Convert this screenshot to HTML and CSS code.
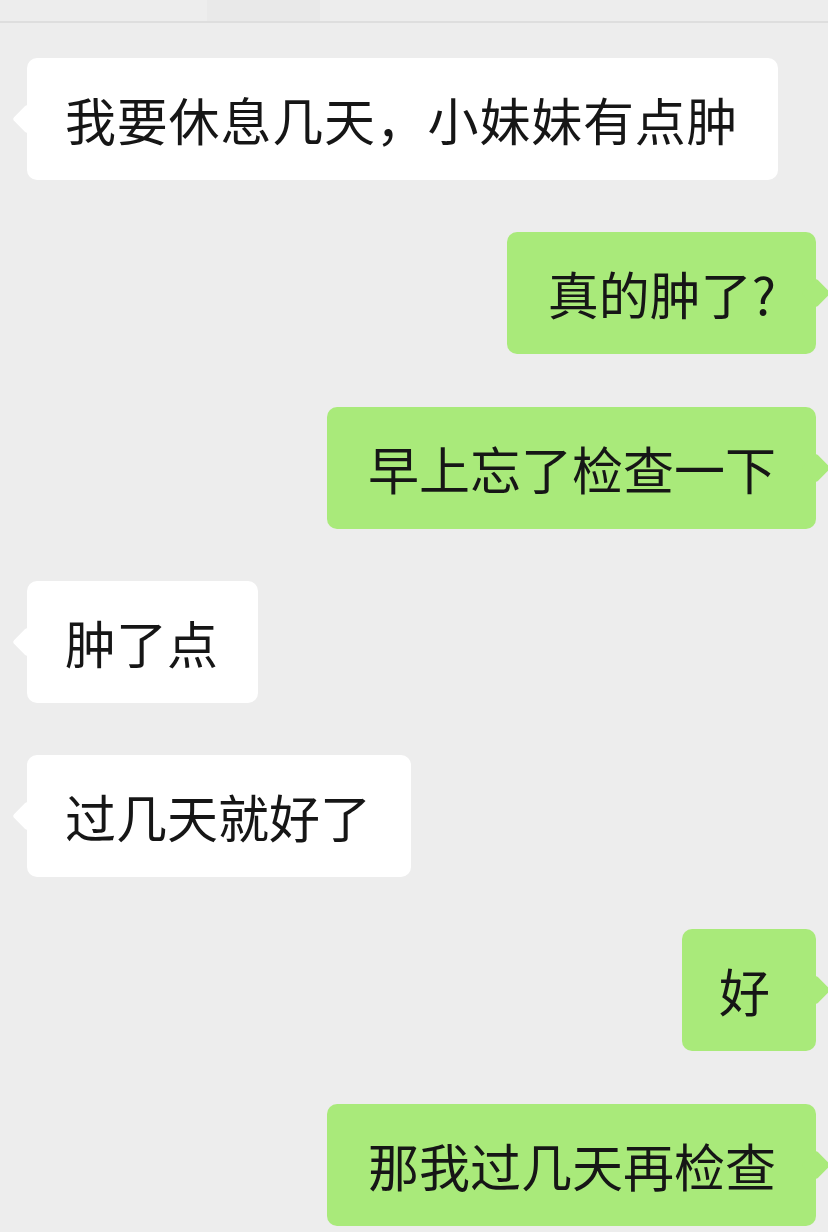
FILE: index.html
```html
<!DOCTYPE html>
<html lang="zh-CN">
<head>
    <meta charset="UTF-8">
    <meta name="viewport" content="width=device-width, initial-scale=1.0">
    <title>聊天</title>
    <link rel="stylesheet" href="styles.css">
</head>
<body>
    <div class="topBar">
        <div class="topMark"></div>
    </div>
    <div class="chat">
        <div class="row left"><div class="bubble wide">我要休息几天，小妹妹有点肿</div></div>
        <div class="row right"><div class="bubble">真的肿了?</div></div>
        <div class="row right"><div class="bubble">早上忘了检查一下</div></div>
        <div class="row left"><div class="bubble">肿了点</div></div>
        <div class="row left"><div class="bubble">过几天就好了</div></div>
        <div class="row right"><div class="bubble single">好</div></div>
        <div class="row right"><div class="bubble">那我过几天再检查</div></div>
    </div>
</body>
</html>
```

FILE: styles.css
```css
*{
    padding: 0;
    margin: 0;
    box-sizing: border-box;
}
body{
    background: #ededed;
    font-family: "Noto Sans CJK SC", "Noto Sans", sans-serif;
    overflow: hidden;
    height: 1232px;
}
.topBar{
    height: 23px;
    border-bottom: 2px solid #dedede;
    display: flex;
}
.topMark{
    margin-left: 207px;
    width: 113px;
    background: #e9e9e9;
}
.chat{
    display: flex;
    flex-direction: column;
    gap: 52.3px;
    padding-top: 35px;
}
.row{
    display: flex;
}
.row.left{
    justify-content: flex-start;
    padding-left: 27px;
}
.row.right{
    justify-content: flex-end;
    padding-right: 12px;
}
.bubble{
    position: relative;
    font-size: 51px;
    line-height: 62px;
    padding: 30px 40px 30px 38px;
    border-radius: 10px;
    color: #161616;
    white-space: nowrap;
}
.bubble.wide{
    letter-spacing: 0.8px;
}
.bubble.single{
    padding-left: 42px;
    padding-right: 41px;
}
.left .bubble{
    background: #fff;
}
.right .bubble{
    background: #a9ea7a;
    padding-left: 41px;
}
.right .bubble.single{
    padding-left: 37px;
    padding-right: 46px;
}
/* little tail pointing at the sender */
.bubble::before{
    content: "";
    position: absolute;
    top: 50%;
    width: 21px;
    height: 21px;
    border-radius: 3px;
    transform: translate(-50%, -50%) rotate(45deg);
}
.left .bubble::before{
    left: 0;
    background: #fff;
}
.right .bubble::before{
    left: 100%;
    background: #a9ea7a;
}
```
